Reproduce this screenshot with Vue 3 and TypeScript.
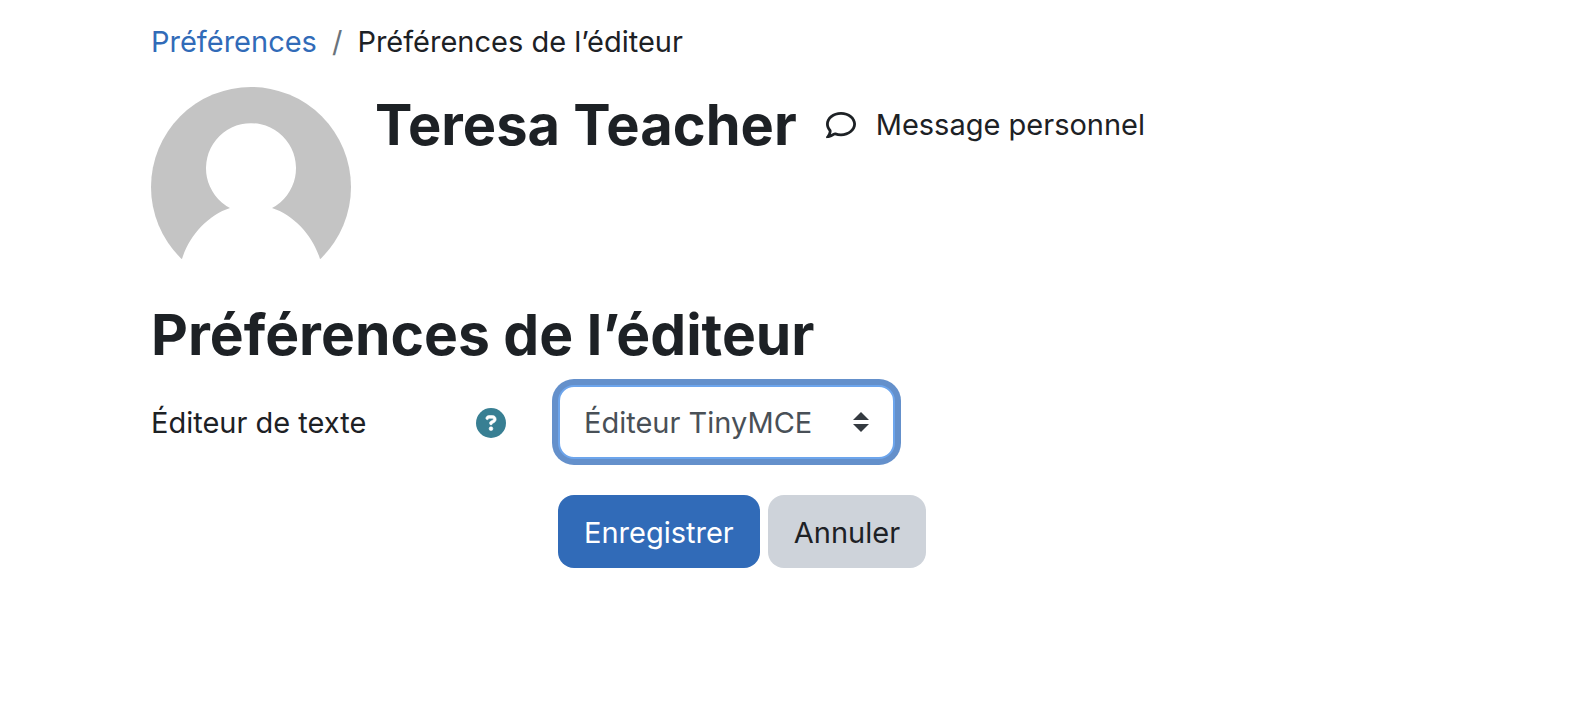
<script setup lang="ts">
import { ref } from 'vue'

const editor = ref('tiny')
</script>

<template>
  <main class="page">
    <nav class="breadcrumb" aria-label="Fil d’Ariane">
      <a href="#">Préférences</a>
      <span class="divider">/</span>
      <span>Préférences de l’éditeur</span>
    </nav>
    <header class="profile">
      <svg class="avatar" viewBox="0 0 200 200" aria-hidden="true">
        <defs>
          <clipPath id="disc"><circle cx="100" cy="100" r="100" /></clipPath>
        </defs>
        <g clip-path="url(#disc)">
          <rect width="200" height="172" fill="#c4c4c4" />
          <path d="M31 172C38 149 57 128 79 121A45 45 0 1 1 121 121C143 128 162 149 169 172V200H31Z" fill="#fff" />
        </g>
      </svg>
      <h1>Teresa Teacher</h1>
      <a class="message" href="#">
        <svg viewBox="0 0 512 512" aria-hidden="true">
          <path fill="currentColor" d="M123.600 391.300c12.900-9.400 29.600-11.800 44.600-6.400c26.500 9.600 56.200 15.100 87.800 15.100c124.700 0 208-80.500 208-160s-83.300-160-208-160S48 160.500 48 240c0 32 12.400 62.800 35.700 89.200c8.600 9.700 12.800 22.500 11.800 35.500c-1.400 18.100-5.700 34.700-11.300 49.400c17-7.900 31.100-16.700 39.400-22.700zM21.200 431.900c1.800-2.700 3.500-5.400 5.100-8.100c10-16.600 19.500-38.400 21.400-62.900C17.700 326.800 0 285.100 0 240C0 125.100 114.600 32 256 32s256 93.100 256 208s-114.600 208-256 208c-37.100 0-72.300-6.400-104.100-17.900c-11.900 8.700-31.300 20.600-54.300 30.600c-15.100 6.600-32.300 12.600-50.100 16.100c-.8 .2-1.600 .3-2.400 .5c-4.400 .8-8.700 1.500-13.200 1.900c-.2 0-.5 .1-.7 .1c-5.100 .5-10.200 .8-15.300 .8c-6.500 0-12.300-3.900-14.800-9.900c-2.500-6-1.100-12.800 3.400-17.400c4.100-4.200 7.800-8.700 11.300-13.500c1.700-2.300 3.300-4.600 4.800-6.900l.3-.5z" />
        </svg>
        <span>Message personnel</span>
      </a>
    </header>
    <h2>Préférences de l’éditeur</h2>
    <form @submit.prevent>
      <div class="field">
        <div class="label">
          <label for="editor">Éditeur de texte</label>
          <button class="help" type="button" aria-label="Aide sur Éditeur de texte">
            <svg viewBox="0 0 512 512" aria-hidden="true">
              <circle cx="256" cy="256" r="256" fill="currentColor" />
              <path fill="#fff" stroke="#fff" stroke-width="10" d="M169.800 165.300c7.900-22.300 29.100-37.300 52.800-37.300h58.300c34.900 0 63.100 28.300 63.100 63.100c0 22.600-12.100 43.500-31.700 54.800L280 264.400c-.2 13-10.900 23.600-24 23.600c-13.300 0-24-10.700-24-24V250.500c0-8.600 4.600-16.500 12.100-20.800l44.300-25.400c4.700-2.700 7.600-7.700 7.600-13.100c0-8.400-6.800-15.100-15.100-15.100H222.600c-3.400 0-6.400 2.100-7.500 5.300l-.4 1.200c-4.400 12.500-18.200 19-30.600 14.600s-19-18.200-14.600-30.600l.4-1.200zM224 352a32 32 0 1 1 64 0 32 32 0 1 1 -64 0z" />
            </svg>
          </button>
        </div>
        <div class="select-box">
          <select id="editor" v-model="editor">
            <option value="tiny">Éditeur TinyMCE</option>
          </select>
          <svg class="arrows" viewBox="0 0 16 20" aria-hidden="true">
            <path fill="#343a40" d="M8 0L16 8H0ZM0 12H16L8 20Z" />
          </svg>
        </div>
      </div>
      <div class="actions">
        <button class="primary" type="submit">Enregistrer</button>
        <button class="secondary" type="button">Annuler</button>
      </div>
    </form>
  </main>
</template>

<style>
body {
  background: #fff;
}
</style>

<style scoped>
.page {
  padding: 20px 151px 40px;
  color: #1d2125;
  font: 29px/44px Inter, "Liberation Sans", sans-serif;
}
a {
  text-decoration: none;
}
.breadcrumb {
  display: flex;
  gap: 15px;
}
.breadcrumb a {
  color: #316bb8;
}
.divider {
  color: #6a737b;
}
.profile {
  display: flex;
  align-items: flex-start;
  margin-top: 23px;
}
.avatar {
  width: 200px;
  height: 200px;
  flex: none;
}
h1,
h2 {
  margin: 0;
  font-weight: 700;
  line-height: 72px;
}
h1 {
  margin-left: 24px;
  padding-top: 2px;
  font-size: 56px;
}
h2 {
  margin-top: 12px;
  font-size: 57px;
}
.message {
  display: flex;
  align-items: center;
  gap: 20px;
  margin: 16px 0 0 29px;
  color: #1d2125;
}
.message svg {
  width: 30px;
  height: 30px;
}
.field {
  display: flex;
  align-items: center;
  margin-top: 14px;
}
.label {
  display: flex;
  flex: none;
  align-items: center;
  justify-content: space-between;
  box-sizing: border-box;
  width: 407px;
  padding: 2px 52px 0 0;
}
button {
  border: 0;
  font: inherit;
  cursor: pointer;
}
.help {
  display: flex;
  padding: 0;
  background: none;
  color: #387f93;
}
.help svg {
  width: 30px;
  height: 30px;
}
.select-box {
  position: relative;
}
select {
  appearance: none;
  box-sizing: border-box;
  width: 337px;
  height: 74px;
  padding: 2px 24px 0;
  border: 2px solid #6da5ec;
  border-radius: 16px;
  outline: none;
  box-shadow: 0 0 0 6px #6490cb;
  background: #fff;
  color: #495057;
  font: inherit;
}
.arrows {
  position: absolute;
  top: 27px;
  right: 26px;
  width: 16px;
  height: 20px;
  pointer-events: none;
}
.actions {
  display: flex;
  gap: 8px;
  margin: 36px 0 0 407px;
}
.actions button {
  padding: 16px 26px 13px;
  border-radius: 16px;
}
.primary {
  background: #316bb8;
  color: #fff;
}
.secondary {
  background: #ced3da;
  color: #1d2125;
}
</style>
